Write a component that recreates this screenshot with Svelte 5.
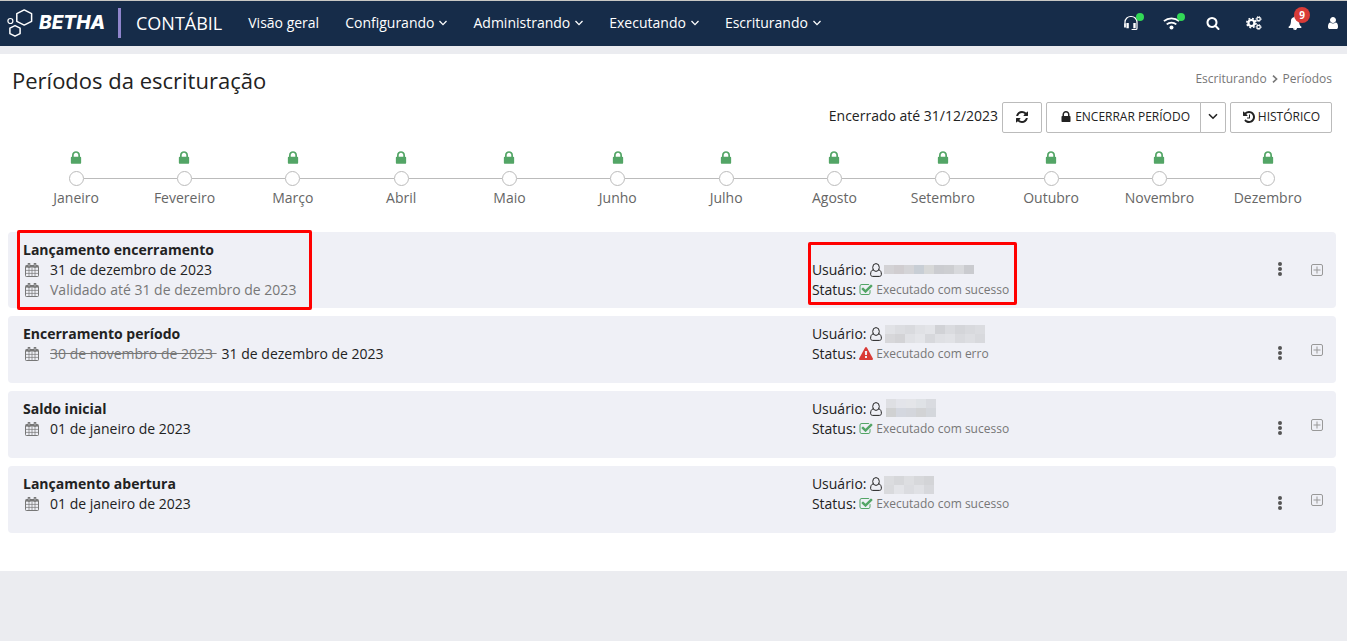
<script lang="ts">
  type Entry = {
    title: string;
    date: string;
    oldDate?: string;
    validated?: string;
    ok: boolean;
    marked?: boolean;
    mask: { top: number; left: number; rows: string[][] };
  };

  const menu = [
    { label: 'Visão geral', sub: false },
    { label: 'Configurando', sub: true },
    { label: 'Administrando', sub: true },
    { label: 'Executando', sub: true },
    { label: 'Escriturando', sub: true },
  ];

  const months = [
    'Janeiro', 'Fevereiro', 'Março', 'Abril', 'Maio', 'Junho',
    'Julho', 'Agosto', 'Setembro', 'Outubro', 'Novembro', 'Dezembro',
  ];

  const entries: Entry[] = [
    {
      title: 'Lançamento encerramento',
      date: '31 de dezembro de 2023',
      validated: 'Validado até 31 de dezembro de 2023',
      ok: true,
      marked: true,
      mask: {
        top: 5,
        left: 2,
        rows: [
          ['#d3d2d5', '#d0cdd0', '#d4d4d7', '#c8ced5', '#d7d8d8', '#cbccd0', '#cdced1', '#d8d9dc', '#cacbcf'],
        ],
      },
    },
    {
      title: 'Encerramento período',
      date: '31 de dezembro de 2023',
      oldDate: '30 de novembro de 2023',
      ok: false,
      mask: {
        top: 1,
        left: 3,
        rows: [
          ['#e1e2e6', '#dcdde1', '#d9dade', '#e0e1e5', '#e3e4e8', '#d1d2d6', '#dadbdf', '#d4d5d9', '#d8d9dd', '#dbdce0'],
          ['#d7d7da', '#d3d3d6', '#e0e1e5', '#e4e5e9', '#d7d8dc', '#dfe0e4', '#e1e2e6', '#d9dade', '#dddee2', '#d8d9dd'],
        ],
      },
    },
    {
      title: 'Saldo inicial',
      date: '01 de janeiro de 2023',
      ok: true,
      mask: {
        top: 0,
        left: 4,
        rows: [
          ['#dedfe3', '#e3e4ea', '#e4e5e9', '#dfe2e6', '#d9dbe0'],
          ['#d0d1d2', '#d4d7df', '#d4d6dc', '#d2d3d5', '#d4d7dc'],
        ],
      },
    },
    {
      title: 'Lançamento abertura',
      date: '01 de janeiro de 2023',
      ok: true,
      mask: {
        top: 2,
        left: 2,
        rows: [
          ['#dbdcdf', '#d6d7da', '#dddee1', '#d7d8db', '#d3d4d7'],
          ['#d9dadd', '#e3e4e8', '#dbdce0', '#e0e1e5', '#d7d8dc'],
        ],
      },
    },
  ];

  const lock = 'M640 768h512v-192q0-106-75-181t-181-75-181 75-75 181v192zm832 96v576q0 40-28 68t-68 28h-960q-40 0-68-28t-28-68v-576q0-40 28-68t68-28h32v-192q0-184 132-316t316-132 316 132 132 316v192h32q40 0 68 28t28 68z';
  const refresh = 'M1639 1056q0 5-1 7-64 268-268 434.5t-478 166.5q-146 0-282.5-55t-243.5-157l-129 129q-19 19-45 19t-45-19-19-45v-448q0-26 19-45t45-19h448q26 0 45 19t19 45-19 45l-137 137q71 66 161 102t187 36q134 0 250-65t186-179q11-17 53-117 8-23 30-23h192q13 0 22.5 9.5t9.5 22.5zm25-800v448q0 26-19 45t-45 19h-448q-26 0-45-19t-19-45 19-45l138-138q-148-137-349-137-134 0-250 65t-186 179q-11 17-53 117-8 23-30 23h-199q-13 0-22.5-9.5t-9.5-22.5v-7q65-268 270-434.5t480-166.5q146 0 284 55.5t245 156.5l130-129q19-19 45-19t45 19 19 45z';
  const history = 'M1664 896q0 156-61 298t-164 245-245 164-298 61q-172 0-327-72.5t-264-204.5q-7-10-6.5-22.5t8.5-20.5l137-138q10-9 25-9 16 2 23 12 73 95 179 147t225 52q104 0 198.5-40.5t163.5-109.5 109.5-163.5 40.5-198.5-40.5-198.5-109.5-163.5-163.5-109.5-198.5-40.5q-98 0-188 35.5t-160 101.5l137 138q31 30 14 69-17 40-59 40h-448q-26 0-45-19t-19-45v-448q0-42 40-59 39-17 69 14l130 129q107-101 244.5-156.5t284.5-55.5q156 0 298 61t245 164 164 245 61 298zm-640-288v448q0 14-9 23t-23 9h-320q-14 0-23-9t-9-23v-64q0-14 9-23t23-9h224v-352q0-14 9-23t23-9h64q14 0 23 9t9 23z';
  const search = 'M1216 832q0-185-131.5-316.5t-316.5-131.5-316.5 131.5-131.5 316.5 131.5 316.5 316.5 131.5 316.5-131.5 131.5-316.5zm512 832q0 52-38 90t-90 38q-54 0-90-38l-343-342q-179 124-399 124-143 0-273.5-55.5t-225-150-150-225-55.5-273.5 55.5-273.5 150-225 225-150 273.5-55.5 273.5 55.5 225 150 150 225 55.5 273.5q0 220-124 399l343 343q37 37 37 90z';
  const bell = 'M912 1696q0-16-16-16-59 0-101.5-42.5t-42.5-101.5q0-16-16-16t-16 16q0 73 51.5 124.5t124.5 51.5q16 0 16-16zm816-288q0 52-38 90t-90 38h-448q0 106-75 181t-181 75-181-75-75-181h-448q-52 0-90-38t-38-90q50-42 91-88t85-119.5 74.5-158.5 50-206 19.5-260q0-152 117-282.5t307-158.5q-8-19-8-39 0-40 28-68t68-28 68 28 28 68q0 20-8 39 190 28 307 158.5t117 282.5q0 139 19.5 260t50 206 74.5 158.5 85 119.5 91 88z';
  const user = 'M1536 1399q0 109-62.5 187t-150.5 78h-854q-88 0-150.5-78t-62.5-187q0-85 8.5-160.5t31.5-152 58.5-131 94-89 134.5-34.5q131 128 313 128t313-128q76 0 134.5 34.5t94 89 58.5 131 31.5 152 8.5 160.5zm-256-887q0 159-112.5 271.5t-271.5 112.5-271.5-112.5-112.5-271.5 112.5-271.5 271.5-112.5 271.5 112.5 112.5 271.5z';
  const warning = 'M1024 1375v-190q0-14-9.5-23.5t-22.5-9.5h-192q-13 0-22.5 9.5t-9.5 23.5v190q0 14 9.5 23.5t22.5 9.5h192q13 0 22.5-9.5t9.5-23.5zm-2-374l18-459q0-12-10-19-13-11-24-11h-220q-11 0-24 11-10 7-10 21l17 457q0 10 10 16.5t24 6.5h185q14 0 23.5-6.5t10.5-16.5zm-14-934l768 1408q35 63-2 126-17 29-46.5 46t-63.5 17h-1536q-34 0-63.5-17t-46.5-46q-37-63-2-126l768-1408q17-31 47-49t65-18 65 18 47 49z';
  const check = 'M1472 930v318q0 119-84.5 203.5t-203.5 84.5h-832q-119 0-203.5-84.5t-84.5-203.5v-832q0-119 84.5-203.5t203.5-84.5h832q63 0 117 25 15 7 18 23 3 17-9 29l-49 49q-10 10-23 10-3 0-9-2-23-6-45-6h-832q-66 0-113 47t-47 113v832q0 66 47 113t113 47h832q66 0 113-47t47-113v-254q0-13 9-22l64-64q10-10 23-10 6 0 12 3 20 8 20 29zm231-489l-814 814q-24 24-57 24t-57-24l-430-430q-24-24-24-57t24-57l110-110q24-24 57-24t57 24l263 263 647-647q24-24 57-24t57 24l110 110q24 24 24 57t-24 57z';
</script>

{#snippet icon(path: string, size: number)}
  <svg viewBox="0 0 1792 1792" width={size} height={size} fill="currentColor" aria-hidden="true"><path d={path} /></svg>
{/snippet}

{#snippet chevron()}
  <svg viewBox="0 0 8 6" width="8" height="6" fill="none" stroke="currentColor" stroke-width="1.3" aria-hidden="true"><path d="M.5 1 4 4.6 7.5 1" /></svg>
{/snippet}

{#snippet calendar()}
  <svg class="calendar" viewBox="0 0 14 14" width="14" height="14" fill="none" stroke="currentColor" aria-hidden="true">
    <rect x=".5" y="2.5" width="13" height="11" rx=".8" />
    <path d="M1 3.5h12" stroke-width="2.2" />
    <path d="M1 7.4h12M1 10.4h12M4 5v8M7 5v8M10 5v8" stroke-width=".7" />
    <path d="M4 .8v2.8M10 .8v2.8" stroke-width="2.6" stroke-linecap="round" />
    <path d="M4 1.2v2.2M10 1.2v2.2" stroke="#c9cacf" stroke-width=".8" />
  </svg>
{/snippet}

<header class="topbar">
  <a class="brand" href="#inicio">
    <svg viewBox="0 0 26 28" width="26" height="28" fill="none" stroke="#fff" stroke-width="1.5" stroke-linejoin="round" aria-hidden="true">
      <path d="M17.2 .9 24.6 4.7V12.3L17.2 16.1 9.8 12.3V4.7Z" />
      <path d="M8 16.6 13.1 19.2V24.6L8 27.2 2.9 24.6V19.2Z" />
      <circle cx="3.4" cy="12" r="2.5" stroke-width="1.2" />
    </svg>
    <span>BETHA</span>
  </a>
  <span class="product">CONTÁBIL</span>
  <nav class="menu">
    {#each menu as item}
      <a href="#menu">{item.label}{#if item.sub}{@render chevron()}{/if}</a>
    {/each}
  </nav>
  <div class="tools">
    <button aria-label="Suporte">
      <svg viewBox="0 0 16 16" width="16" height="16" fill="none" stroke="currentColor" aria-hidden="true">
        <path d="M2 9V7A5.6 5.6 0 0 1 8 1.5 5.6 5.6 0 0 1 14 7v6.2q0 1.3-1.3 1.3H8.6" stroke-width="1.2" />
        <path d="M4.6 8v5.2M11.5 8v5.2" stroke-width="2.4" />
        <path d="M2 8.4v4.2" stroke-width="1.8" />
      </svg>
      <i class="dot"></i>
    </button>
    <button aria-label="Conexão">
      <svg viewBox="0 0 17 14" width="17" height="14" fill="none" stroke="currentColor" stroke-width="1.8" aria-hidden="true">
        <path d="M.9 5.2a11.4 11.4 0 0 1 15.2 0M3.7 8.4a7.2 7.2 0 0 1 9.6 0" />
        <circle cx="8.5" cy="11.6" r="2" fill="currentColor" stroke="none" />
      </svg>
      <i class="dot"></i>
    </button>
    <button aria-label="Pesquisar">{@render icon(search, 14)}</button>
    <button aria-label="Configurações">
      <svg viewBox="0 0 16 14" width="16" height="14" fill="none" stroke="currentColor" aria-hidden="true">
        <circle cx="5.4" cy="7" r="3" stroke-width="2.2" />
        <circle cx="5.4" cy="7" r="4.6" stroke-width="1.6" stroke-dasharray="1.9 1.713" />
        <circle cx="12.6" cy="3" r="1.7" stroke-width="1.2" />
        <circle cx="12.6" cy="3" r="2.5" stroke-width="1" stroke-dasharray="1.1 .863" />
        <circle cx="12.6" cy="11" r="1.7" stroke-width="1.2" />
        <circle cx="12.6" cy="11" r="2.5" stroke-width="1" stroke-dasharray="1.1 .863" />
      </svg>
    </button>
    <button aria-label="Notificações">{@render icon(bell, 14)}<span class="badge">9</span></button>
    <button class="profile" aria-label="Usuário">{@render icon(user, 14)}</button>
  </div>
</header>

<main>
  <div class="page-head">
    <h1>Períodos da escrituração</h1>
    <nav class="breadcrumb" aria-label="Caminho">
      <a href="#escriturando">Escriturando</a>
      <svg viewBox="0 0 6 8" width="6" height="8" fill="none" stroke="currentColor" stroke-width="1.6" aria-hidden="true"><path d="M1 .6 4.6 4 1 7.4" /></svg>
      <span>Períodos</span>
    </nav>
  </div>

  <div class="actions">
    <span class="closed">Encerrado até 31/12/2023</span>
    <button class="btn btn-refresh" aria-label="Atualizar">{@render icon(refresh, 14)}</button>
    <div class="group">
      <button class="btn btn-close">{@render icon(lock, 14)}ENCERRAR PERÍODO</button>
      <button class="btn btn-more" aria-label="Mais opções">
        <svg viewBox="0 0 10 7" width="10" height="7" fill="none" stroke="currentColor" stroke-width="1.6" aria-hidden="true"><path d="M1 1.2 5 5.2 9 1.2" /></svg>
      </button>
    </div>
    <button class="btn btn-history">{@render icon(history, 14)}HISTÓRICO</button>
  </div>

  <ol class="timeline">
    {#each months as month}
      <li>
        {@render icon(lock, 16)}
        <div class="track"><i></i></div>
        <span>{month}</span>
      </li>
    {/each}
  </ol>

  <section class="entries">
    {#each entries as e (e.title)}
      <article class="entry" class:centered={e.marked}>
        <div class="info">
          <h2>{e.title}</h2>
          <div class="line">{@render calendar()}{#if e.oldDate}<s>{e.oldDate}&nbsp;</s>{/if}<span>{e.date}</span></div>
          {#if e.validated}
            <div class="line muted">{@render calendar()}<span>{e.validated}</span></div>
          {/if}
          {#if e.marked}<div class="mark mark-info"></div>{/if}
        </div>
        <div class="run">
          <div class="line">
            Usuário:
            <svg class="user-o" viewBox="0 0 12 14" width="12" height="14" fill="none" stroke="currentColor" aria-hidden="true">
              <ellipse cx="6" cy="4.5" rx="3.3" ry="3.9" />
              <path d="M3.3 6.7C1.3 7.2.6 9.3.6 11.3.6 12.6 1.4 13.4 2.6 13.4H9.4C10.6 13.4 11.4 12.6 11.4 11.3 11.4 9.3 10.7 7.2 8.7 6.7" />
            </svg>
            <span class="mask" style:margin-left="{e.mask.left}px" style:margin-top="{e.mask.top}px">
              {#each e.mask.rows as row}
                <span class="mask-row">{#each row as color}<i style:background={color}></i>{/each}</span>
              {/each}
            </span>
          </div>
          <div class="line">
            Status:
            <span class="state" class:error={!e.ok}>{@render icon(e.ok ? check : warning, 14)}</span>
            <small>{e.ok ? 'Executado com sucesso' : 'Executado com erro'}</small>
          </div>
          {#if e.marked}<div class="mark mark-run"></div>{/if}
        </div>
        <button class="dots" aria-label="Ações">
          <svg viewBox="0 0 4 14" width="4" height="14" fill="currentColor" aria-hidden="true"><circle cx="2" cy="2" r="2" /><circle cx="2" cy="7" r="2" /><circle cx="2" cy="12" r="2" /></svg>
        </button>
        <button class="expand" aria-label="Expandir">
          <svg viewBox="0 0 12 12" width="12" height="12" fill="none" stroke="currentColor" aria-hidden="true"><rect x=".5" y=".5" width="11" height="11" rx="1.5" /><path d="M2.5 6h7M6 2.5v7" /></svg>
        </button>
      </article>
    {/each}
  </section>
</main>

<style>
  :global(body) {
    background: #ebecf0;
    color: #222;
    font-family: 'Open Sans', 'Noto Sans', sans-serif;
    font-size: 14px;
    line-height: 20px;
  }
  svg { display: block; flex: none; }
  a { color: inherit; text-decoration: none; }
  button { font: inherit; color: inherit; background: none; border: none; padding: 0; cursor: pointer; }

  .topbar {
    display: flex;
    align-items: center;
    box-sizing: border-box;
    height: 46px;
    padding: 0 9px 2px 7px;
    border-top: 1px solid #c8c8c4;
    background: #162c49;
    color: #fff;
  }
  .brand { display: flex; align-items: center; gap: 6px; box-sizing: border-box; width: 114px; border-right: 3px solid #8f85cc; height: 30px; font-family: Inter, 'Open Sans', sans-serif; font-size: 19px; font-weight: 800; font-style: italic; }
  .product { font-size: 18px; margin: 0 26px 0 15px; }
  .menu { display: flex; gap: 26px; flex: 1; }
  .menu a { display: flex; align-items: center; gap: 5px; }
  .tools { display: flex; gap: 24px; }
  .tools button { position: relative; display: flex; align-items: center; justify-content: center; width: 17px; height: 20px; }
  .tools .profile { width: 11px; }
  .dot { position: absolute; top: 0; right: -5px; width: 8px; height: 8px; border-radius: 50%; background: #32d957; }
  .badge { position: absolute; top: -6px; left: 8px; width: 16px; border-radius: 50%; background: #d93b37; font-size: 10px; line-height: 16px; font-weight: 700; }

  main { background: #fff; margin-top: 8px; padding: 12px 11px 38px 8px; }
  .page-head { display: flex; justify-content: space-between; padding: 0 4px; }
  h1 { margin: 0; font-size: 22px; line-height: 28px; font-weight: 400; }
  .breadcrumb { display: flex; align-items: center; gap: 5px; height: 26px; font-size: 12px; color: #777; }

  .actions { display: flex; justify-content: flex-end; gap: 4px; margin-top: 8px; padding-right: 4px; }
  .closed { line-height: 28px; }
  .btn { display: flex; align-items: center; justify-content: center; gap: 2px; box-sizing: border-box; height: 31px; padding-bottom: 2px; border: 1px solid #bbb; border-radius: 2px; background: #fff; font-size: 12px; }
  .group { display: flex; }
  .btn-refresh { width: 40px; }
  .btn-close { padding: 0 10px 2px 12px; border-radius: 2px 0 0 2px; }
  .btn-more { width: 26px; margin-left: -1px; border-radius: 0 2px 2px 0; }
  .btn-history { width: 102px; }

  .timeline { display: flex; list-style: none; margin: 17px 14px 0 14px; padding: 0; }
  .timeline li { flex: 1; display: flex; flex-direction: column; align-items: center; color: #53a566; }
  .timeline span { color: #666; margin-top: 2px; }
  .track { display: flex; align-items: center; align-self: stretch; margin-top: 5px; }
  .track::before, .track::after { content: ''; flex: 1; height: 1px; background: #bbb; }
  li:first-child .track::before, li:last-child .track::after { background: none; }
  .track i { box-sizing: border-box; width: 15px; height: 15px; border: 1px solid #bbb; border-radius: 50%; }

  .entries { display: flex; flex-direction: column; gap: 8px; margin-top: 24px; }
  .entry { display: flex; align-items: flex-start; box-sizing: border-box; min-height: 67px; padding: 8px 13px 8px 15px; border-radius: 4px; background: #eff0f6; }
  .info { position: relative; flex: 787 1 0; }
  .run { position: relative; flex: 465 1 0; }
  .centered .run { align-self: flex-end; }
  h2 { margin: 0; font-size: 14px; line-height: 20px; font-weight: 700; }
  .line { display: flex; align-items: center; height: 20px; }
  .calendar { color: #777; margin: 0 11px 0 2px; }
  .muted, s, small { color: #777; }
  s { margin-right: 5px; }
  small { font-size: 12px; }
  .user-o { margin-left: 3px; }
  .mask { align-self: flex-start; }
  .mask-row { display: flex; }
  .mask i { width: 10px; height: 9px; }
  .state { color: #53a566; margin: 0 3px; }
  .state.error { color: #d93b37; }
  .dots { margin: 22px 29px 0 0; color: #555; }
  .expand { align-self: center; color: #999; }
  .mark { position: absolute; border: 3px solid #f00; border-radius: 2px; pointer-events: none; }
  .mark-info { top: -10px; left: -6px; width: 289px; height: 74px; }
  .mark-run { top: -18px; left: -4px; width: 203px; height: 57px; }
</style>
